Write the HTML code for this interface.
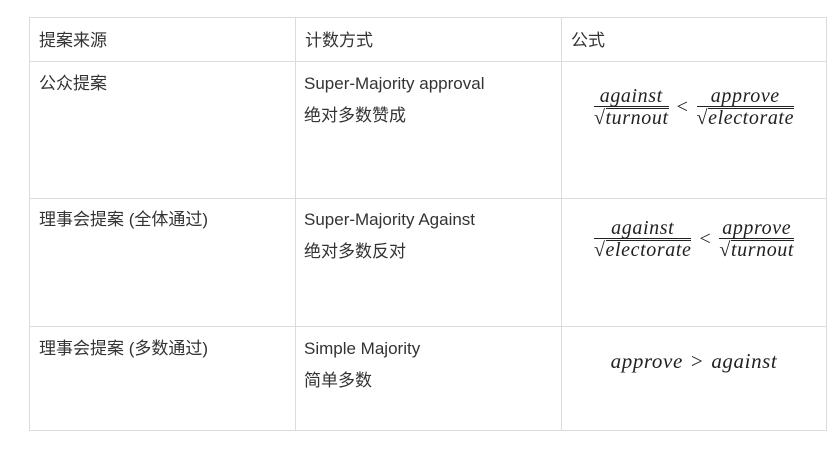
<!DOCTYPE html>
<html><head><meta charset="utf-8"><style>
body{margin:0;width:840px;height:449px;background:#fff;position:relative;overflow:hidden;font-family:"Liberation Sans","Noto Sans CJK SC",sans-serif;color:#333;font-size:17px}
.l{position:absolute;background:#dcdcdc}
.t{position:absolute;line-height:32px;white-space:nowrap}
.m{position:absolute;font-family:"Liberation Serif","DejaVu Serif",serif;font-style:italic;font-size:20px;letter-spacing:0.6px;color:#222;display:flex;align-items:center;white-space:nowrap}
.f{display:inline-flex;flex-direction:column;align-items:center}
.n{line-height:20px;padding:0 2px}
.d{border-top:1.3px solid #222;line-height:20px;padding-top:1px;text-align:center}
.r{border-top:1.3px solid #222;display:inline-block;line-height:19px}
.s{font-style:normal;font-size:20px}
.op{font-style:normal;margin:0 8px}
</style></head><body>
<div class="l" style="left:29px;top:17px;width:798px;height:1px"></div>
<div class="l" style="left:29px;top:61px;width:798px;height:1px"></div>
<div class="l" style="left:29px;top:198px;width:798px;height:1px"></div>
<div class="l" style="left:29px;top:326px;width:798px;height:1px"></div>
<div class="l" style="left:29px;top:430px;width:798px;height:1px"></div>
<div class="l" style="left:29px;top:17px;width:1px;height:414px"></div>
<div class="l" style="left:295px;top:17px;width:1px;height:414px"></div>
<div class="l" style="left:561px;top:17px;width:1px;height:414px"></div>
<div class="l" style="left:826px;top:17px;width:1px;height:414px"></div>

<div class="t" style="left:39px;top:25px">提案来源</div>
<div class="t" style="left:305px;top:25px">计数方式</div>
<div class="t" style="left:571px;top:25px">公式</div>

<div class="t" style="left:39px;top:68px">公众提案</div>
<div class="t" style="left:304px;top:68px">Super-Majority approval<br>绝对多数赞成</div>
<div class="t" style="left:39px;top:204px">理事会提案 (全体通过)</div>
<div class="t" style="left:304px;top:204px">Super-Majority Against<br>绝对多数反对</div>
<div class="t" style="left:39px;top:333px">理事会提案 (多数通过)</div>
<div class="t" style="left:304px;top:333px">Simple Majority<br>简单多数</div>

<div class="m" style="left:562px;width:264px;justify-content:center;top:86px">
 <span class="f"><span class="n">against</span><span class="d"><span class="s">√</span><span class="r">turnout</span></span></span>
 <span class="op">&lt;</span>
 <span class="f"><span class="n">approve</span><span class="d"><span class="s">√</span><span class="r">electorate</span></span></span>
</div>
<div class="m" style="left:562px;width:264px;justify-content:center;top:218px">
 <span class="f"><span class="n">against</span><span class="d"><span class="s">√</span><span class="r">electorate</span></span></span>
 <span class="op">&lt;</span>
 <span class="f"><span class="n">approve</span><span class="d"><span class="s">√</span><span class="r">turnout</span></span></span>
</div>
<div class="m" style="left:562px;width:264px;justify-content:center;top:349px;font-size:21px">approve<span class="op">&gt;</span>against</div>
</body></html>
